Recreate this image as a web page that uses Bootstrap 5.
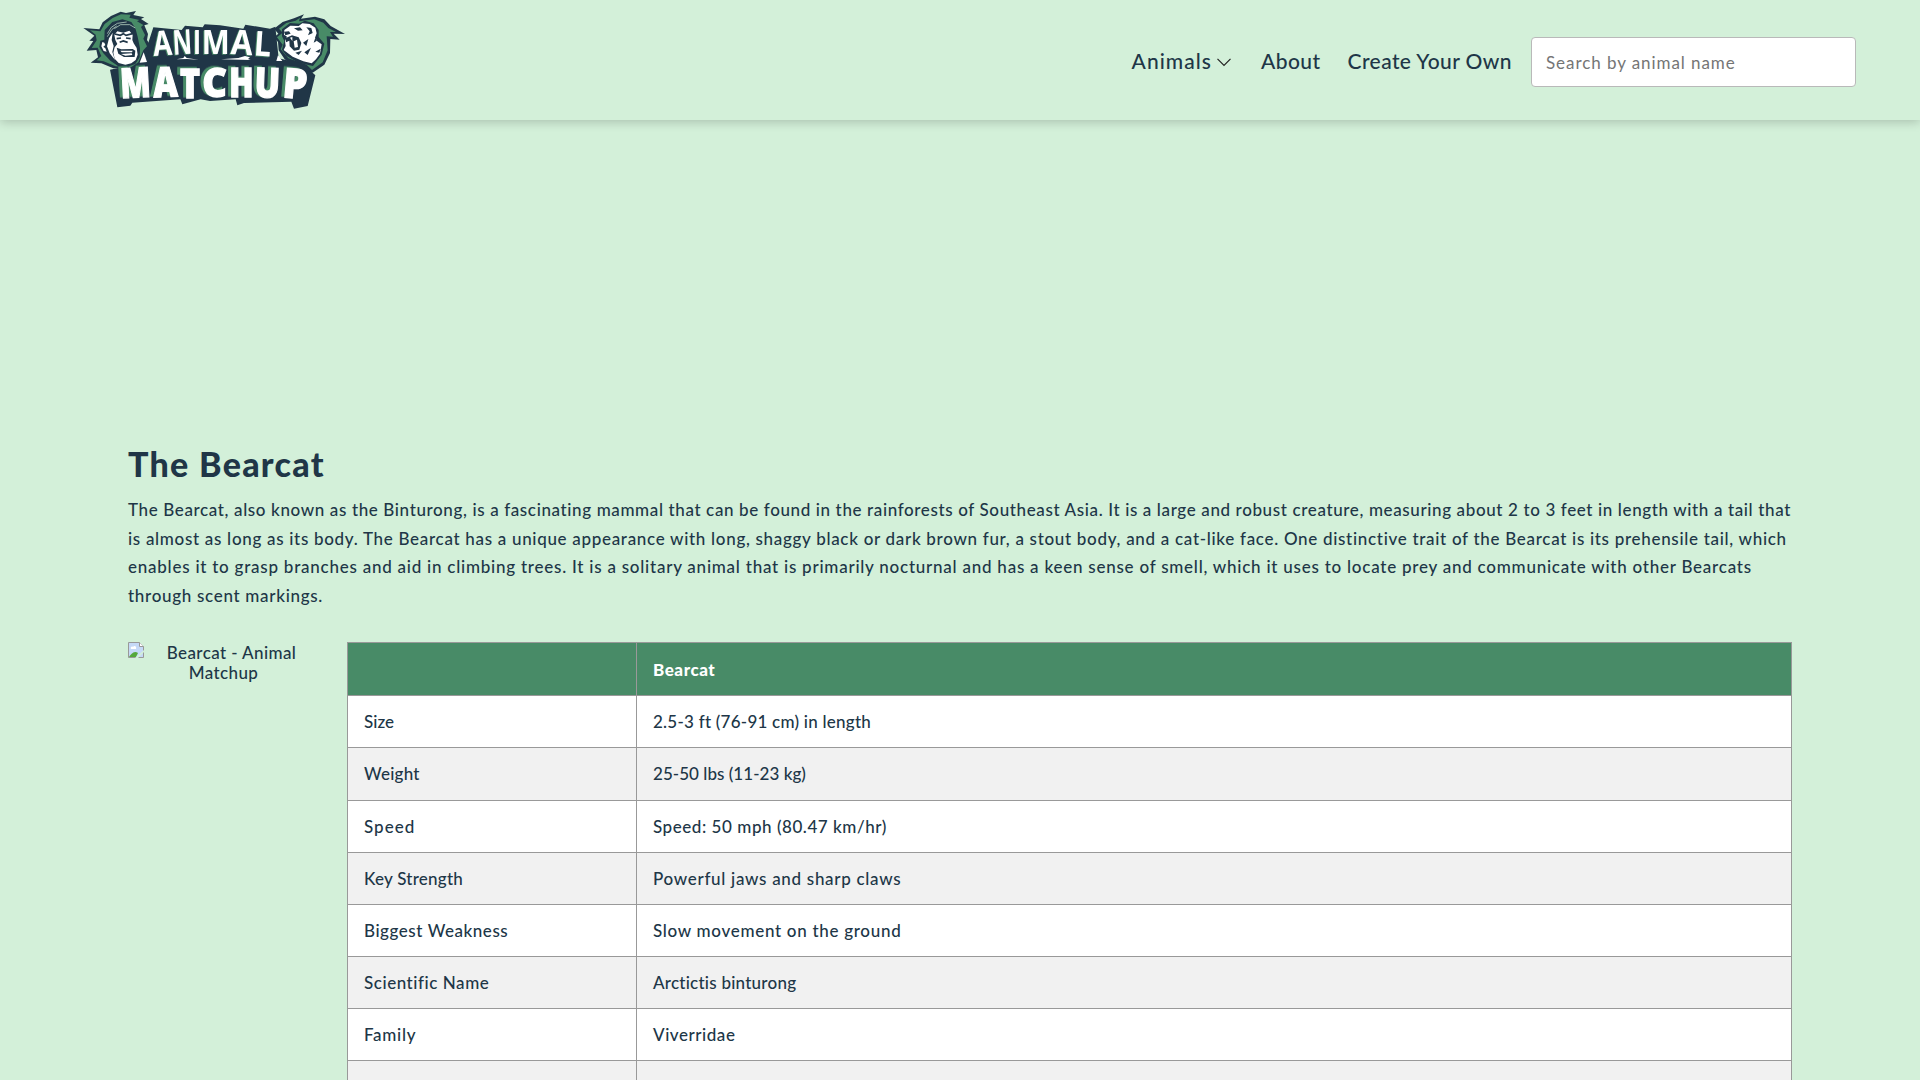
<!DOCTYPE html>
<html lang="en">
<head>
<meta charset="utf-8">
<meta name="viewport" content="width=device-width, initial-scale=1">
<title>Bearcat - Animal Matchup</title>
<link href="https://cdn.jsdelivr.net/npm/bootstrap@5.3.0/dist/css/bootstrap.min.css" rel="stylesheet">
<style>
:root { --ink:#203647; --mint:#d3f0d9; --leaf:#488b67; }
body { font-family:Lato,"Open Sans",sans-serif; font-size:17px; font-weight:500; line-height:19.2px; color:var(--ink); background:var(--mint); overflow:hidden; }
.site-header { height:120px; padding:0 64px 0 70px; background:var(--mint); box-shadow:0 2px 10px rgba(0,0,0,.2); }
.menu-link { color:var(--ink); font-size:21px; line-height:28px; white-space:nowrap; text-decoration:none; letter-spacing:.42px; padding-top:2px; }
.menu-link.wide { letter-spacing:1.05px; }
.menu-link.last { margin-left:27px; }
.chevron { margin:2px 30px 0 5px; }
.site-search { width:325px; height:50px; border:1px solid #b9b9b9; border-radius:4px; padding:0 14px; margin:4px 0 0 19px; font-size:17px; letter-spacing:.93px; }
.site-search::placeholder { color:#757575; opacity:1; }
.ad-space { height:320px; }
.page-body { padding:0 128px; }
.page-title { font-size:34px; font-weight:900; line-height:48px; letter-spacing:1.3px; margin:0 0 8px; }
.intro { line-height:28.7px; margin-bottom:31.5px; }
.intro span { display:block; white-space:nowrap; width:max-content; letter-spacing:.694px; }
.intro span:nth-child(1) { letter-spacing:.625px; }
.intro span:nth-child(3) { letter-spacing:.76px; }
.photo { width:191px; margin-right:28px; padding-top:1px; letter-spacing:.4px; }
.photo svg { float:left; margin-top:-1px; }
.facts { border-collapse:collapse; width:1445px; table-layout:fixed; margin:0; letter-spacing:.55px; }
.facts th, .facts td { border:1px solid #999; padding:16px; line-height:19.15px; }
.facts th:first-child { width:289px; }
.facts thead th { background:var(--leaf); color:#fff; height:53px; font-weight:900; }
.facts tbody tr { background:#fff; }
.facts tbody tr:nth-child(even) { background:#f1f1f1; }
.facts .ls-0 { letter-spacing:.04px; }
.facts .ls-1 { letter-spacing:.24px; }
.facts .ls-3 { letter-spacing:.7px; }
.facts .ls-4 { letter-spacing:1px; }
.logo-top { filter:drop-shadow(-3px 2px 0 #488b67); }
.logo-bottom { filter:drop-shadow(-9px -4px 0 #488b67); }
</style>
</head>
<body>
<header class="site-header position-relative d-flex align-items-center justify-content-between">
  <a href="#" class="d-block" aria-label="Animal Matchup">
    <svg class="d-block" width="290" height="120" viewBox="0 0 870 360">
      <path fill="#203647" d="M228 150 250 82 335 90 345 77 398 82 404 73 450 76 520 86 526 74 600 86 616 80 626 175 700 192 736 226 713 318 672 326 664 305 522 309 502 316 497 298 420 303 392 298 337 313 331 298 187 308 181 317 142 322 120 209 210 190Z"/>
      <!-- gorilla -->
      <path fill="#203647" d="M40 84 88 88 98 67 123 48 152 35 168 39 198 33 190 45 223 52 213 57 236 72 223 76 234 102 231 120 239 133 231 180 206 205 130 205 94 190 62 188 84 172 79 150 50 152 70 123 58 122 73 107Z"/>
      <path fill="#488b67" d="M60 91 91 94 104 72 128 54 153 43 182 44 178 53 208 60 201 64 220 75 213 81 225 105 220 116 231 139 220 151 205 187 184 201 137 199 101 184 80 181 94 168 83 143 65 144 80 121 77 104Z"/>
      <path fill="#203647" d="M104 90 127 66 157 58 184 66 196 84 203 110 210 145 209 172 196 192 170 201 144 198 121 182 100 160 88 141 91 122 103 119Z"/>
      <path fill="none" stroke="#d3f0d9" stroke-width="2" d="M112 101 124 82 142 70 170 66M112 110 126 88 140 78M133 86 152 74 179 74 196 84"/>
      <path fill="#fff" d="M103 128 97 126 94 139 101 153 110 155 106 145 100 140 106 135ZM117 115 128 98 125 120 131 138 127 156 135 180 119 160 111 139Z"/>
      <path fill="#fff" d="M133 104 142 94 160 98 178 92 188 104 187 120 191 130 200 144 203 164 197 180 184 190 166 194 146 189 134 176 130 158 134 142 142 132 136 120Z"/>
      <path fill="none" stroke="#203647" stroke-width="5" d="M134 102 151 106 160 101 168 106 188 101M140 116 153 114M168 114 182 116M149 127 160 123 173 127"/>
      <path fill="#203647" d="M140 143 154 148 188 147 196 152 194 171 162 171 145 161Z"/>
      <path fill="#fff" d="M151 152 188 152 186 157 155 157ZM153 162 185 160 187 165 166 167Z"/>
      <path fill="#fff" d="M209 188 221 157 231 186Z"/>
      <!-- bear -->
      <path fill="#203647" d="M612 86 638 66 672 55 702 43 693 56 735 50 763 58 782 78 825 102 791 101 809 119 781 117 780 159 763 194 728 218 682 204 644 178 626 151 624 126 612 112 625 101Z"/>
      <path fill="#488b67" d="M627 86 649 69 677 62 690 53 687 64 733 58 760 68 775 84 798 96 780 96 789 110 770 109 773 151 758 187 726 210 710 194 655 175 632 148 638 134 621 112 638 98Z"/>
      <path fill="#203647" d="M636 88 660 69 688 71 704 62 731 70 746 90 746 111 763 131 755 164 729 198 685 188 650 168 636 149 643 123 636 109Z"/>
      <path fill="#fff" d="M643 90 661 77 686 78 697 70 719 72 736 83 740 100 735 113 742 124 755 133 750 161 738 178 725 190 700 184 668 170 641 150 647 138 645 122 651 110 642 104Z"/>
      <path fill="#203647" d="M642 95 657 94 662 101 646 106ZM672 85 690 82 698 91 684 92ZM709 82 724 84 728 99 714 106 719 94ZM646 115 666 106 686 112 694 129 688 149 672 152 659 139 658 122 648 127ZM699 128 715 117 709 138ZM703 157 723 143 713 165ZM736 113 731 128 741 122ZM752 146 736 155 748 158ZM676 158 696 152 686 165Z"/>
      <path fill="#fff" d="M660 113 667 111 667 123ZM671 124 681 119 684 141 674 143Z"/>
      <path fill="#fff" d="M624 166 637 183H619ZM319 178 340 174 344 168 350 174 386 179 351 177ZM453 178 505 174 525 168 540 172 534 177 542 180Z"/>
      <g class="logo-top" fill="#fff" font-family="Open Sans" font-weight="700" font-size="103">
        <text transform="translate(251 168) rotate(-4)" textLength="57" lengthAdjust="spacingAndGlyphs">A</text>
        <text transform="translate(310 164) rotate(-3)" textLength="58" lengthAdjust="spacingAndGlyphs">N</text>
        <text x="369" y="161" textLength="24" lengthAdjust="spacingAndGlyphs">I</text>
        <text x="395" y="161" textLength="84" lengthAdjust="spacingAndGlyphs">M</text>
        <text transform="translate(481 162) rotate(3)" textLength="66" lengthAdjust="spacingAndGlyphs">A</text>
        <text transform="translate(550 166) rotate(4)" textLength="52" lengthAdjust="spacingAndGlyphs">L</text>
      </g>
      <g class="logo-bottom" fill="#fff" stroke="#fff" stroke-width="4" font-family="Open Sans" font-weight="800" font-size="124">
        <text transform="translate(153 295) rotate(-3)" textLength="91" lengthAdjust="spacingAndGlyphs">M</text>
        <text transform="translate(251 292) rotate(-2)" textLength="73" lengthAdjust="spacingAndGlyphs">A</text>
        <text x="330" y="293" textLength="60" lengthAdjust="spacingAndGlyphs">T</text>
        <text x="397" y="291" textLength="74" lengthAdjust="spacingAndGlyphs">C</text>
        <text x="478" y="291" textLength="73" lengthAdjust="spacingAndGlyphs">H</text>
        <text transform="translate(553 291) rotate(2)" textLength="76" lengthAdjust="spacingAndGlyphs">U</text>
        <text transform="translate(636 292) rotate(5)" textLength="72" lengthAdjust="spacingAndGlyphs">P</text>
      </g>
    </svg>
  </a>
  <nav class="d-flex align-items-center">
    <a class="menu-link wide d-flex align-items-center" href="#">Animals
      <svg class="chevron" width="14" height="9" viewBox="0 0 14 9"><path d="M.5.8 7 7.3 13.5.8" fill="none" stroke="#222" stroke-width="1.2"/></svg></a>
    <a class="menu-link" href="#">About</a>
    <a class="menu-link last" href="#">Create Your Own</a>
    <input class="site-search" type="text" placeholder="Search by animal name">
  </nav>
</header>
<main class="page-body">
  <div class="ad-space"></div>
  <h1 class="page-title">The Bearcat</h1>
  <p class="intro">
    <span>The Bearcat, also known as the Binturong, is a fascinating mammal that can be found in the rainforests of Southeast Asia. It is a large and robust creature, measuring about 2 to 3 feet in length with a tail that</span>
    <span>is almost as long as its body. The Bearcat has a unique appearance with long, shaggy black or dark brown fur, a stout body, and a cat-like face. One distinctive trait of the Bearcat is its prehensile tail, which</span>
    <span>enables it to grasp branches and aid in climbing trees. It is a solitary animal that is primarily nocturnal and has a keen sense of smell, which it uses to locate prey and communicate with other Bearcats</span>
    <span>through scent markings.</span>
  </p>
  <div class="d-flex align-items-start">
    <div class="photo text-center">
      <svg width="16" height="16" viewBox="0 0 16 16"><path fill="#c5d9f7" stroke="#999" d="M.5.5h11l4 4v11H.5z"/><path fill="#fff" d="M3 7c-1-2 1-3 2-2 1-2 4-1 3 2z"/><path fill="#55a83b" d="M1 15c2-3 5-7 9-4l-2 4z"/><path fill="#d3f0d9" d="m7 16 9-8v2l-6 6z"/><path fill="#fff" stroke="#999" d="M11.5.5v4h4"/></svg>
      Bearcat - Animal<br>Matchup
    </div>
    <table class="facts">
      <thead><tr><th></th><th>Bearcat</th></tr></thead>
      <tbody>
        <tr><td class="ls-0">Size</td><td class="ls-1">2.5-3 ft (76-91 cm) in length</td></tr>
        <tr><td class="ls-1">Weight</td><td class="ls-0">25-50 lbs (11-23 kg)</td></tr>
        <tr><td class="ls-4">Speed</td><td>Speed: 50 mph (80.47 km/hr)</td></tr>
        <tr><td class="ls-1">Key Strength</td><td class="ls-3">Powerful jaws and sharp claws</td></tr>
        <tr><td>Biggest Weakness</td><td class="ls-3">Slow movement on the ground</td></tr>
        <tr><td>Scientific Name</td><td class="ls-1">Arctictis binturong</td></tr>
        <tr><td class="ls-3">Family</td><td>Viverridae</td></tr>
        <tr><td>&nbsp;</td><td></td></tr>
      </tbody>
    </table>
  </div>
</main>
<script src="https://cdn.jsdelivr.net/npm/bootstrap@5.3.0/dist/js/bootstrap.bundle.min.js"></script>
</body>
</html>
